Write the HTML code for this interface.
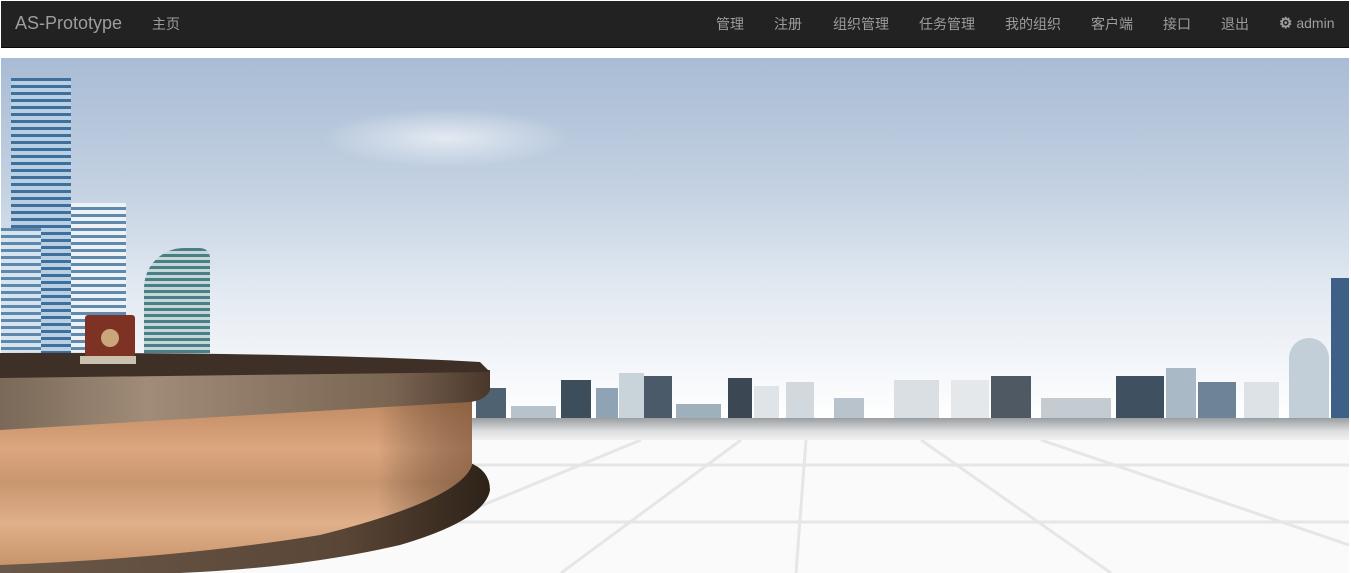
<!DOCTYPE html>
<html><head><meta charset="utf-8"><style>
body{margin:0;width:1351px;height:573px;background:#fff;overflow:hidden;font-family:"Liberation Sans","Noto Sans CJK SC",sans-serif;position:relative}
.nav{position:absolute;left:1px;top:1px;width:1348px;height:46px;background:#222;border-bottom:1px solid #080808}
.nav span{position:absolute;top:13px;font-size:14px;color:#9d9d9d;white-space:nowrap}
.brand{font-size:18px!important;top:12px!important}
.ban{position:absolute;left:1px;top:58px;width:1348px;height:515px;overflow:hidden;background:linear-gradient(#a9bcd5 0%,#c3d1e2 25%,#e2e9f1 45%,#f6f8fb 62%,#fff 70%)}
.b{position:absolute;bottom:155px}
.s{position:absolute;bottom:155px}
</style></head><body>
<div class="nav">
<span class="brand" style="left:14px">AS-Prototype</span>
<span style="left:151px">主页</span>
<span style="left:715px">管理</span>
<span style="left:773px">注册</span>
<span style="left:832px">组织管理</span>
<span style="left:918px">任务管理</span>
<span style="left:1004px">我的组织</span>
<span style="left:1090px">客户端</span>
<span style="left:1162px">接口</span>
<span style="left:1220px">退出</span>
<span style="left:1278px"><b style="font-size:15px">⚙</b> admin</span>
</div>
<div class="ban">
<div style="position:absolute;left:320px;top:50px;width:250px;height:60px;background:radial-gradient(ellipse,rgba(255,255,255,.6),rgba(255,255,255,0) 70%)"></div>
<div class="b" style="left:10px;width:60px;height:340px;background:repeating-linear-gradient(#3f6f9c 0 3px,#b9d0e2 3px 7px)"></div>
<div class="b" style="left:0;width:40px;height:190px;background:repeating-linear-gradient(#5d87ad 0 3px,#d6e4ee 3px 7px)"></div>
<div class="b" style="left:70px;width:55px;height:215px;background:repeating-linear-gradient(#eef2f5 0 4px,#5f8ab0 4px 7px)"></div>
<div class="b" style="left:143px;width:66px;height:170px;border-radius:40px 10px 0 0;background:repeating-linear-gradient(#4a7f8a 0 3px,#c6d8d6 3px 6px)"></div>
<div class="b" style="left:305px;width:42px;height:35px;border-radius:20px 20px 0 0;background:#6f8ca3"></div>
<div class="s" style="left:475px;width:30px;height:30px;background:#4f6272"></div>
<div class="s" style="left:510px;width:45px;height:12px;background:#b7c2cb"></div>
<div class="s" style="left:560px;width:30px;height:38px;background:#3e4d5a"></div>
<div class="s" style="left:595px;width:22px;height:30px;background:#8ea3b4"></div>
<div class="s" style="left:618px;width:25px;height:45px;background:#c9d3da"></div>
<div class="s" style="left:643px;width:28px;height:42px;background:#4a5a68"></div>
<div class="s" style="left:675px;width:45px;height:14px;background:#9fb0bd"></div>
<div class="s" style="left:727px;width:24px;height:40px;background:#3b4854"></div>
<div class="s" style="left:753px;width:25px;height:32px;background:#dfe4e8"></div>
<div class="s" style="left:785px;width:28px;height:36px;background:#d2d9de"></div>
<div class="s" style="left:833px;width:30px;height:20px;background:#b8c3cb"></div>
<div class="s" style="left:893px;width:45px;height:38px;background:#d9dfe3"></div>
<div class="s" style="left:950px;width:38px;height:38px;background:#e4e8eb"></div>
<div class="s" style="left:990px;width:40px;height:42px;background:#4e5963"></div>
<div class="s" style="left:1040px;width:70px;height:20px;background:#c4ccd2"></div>
<div class="s" style="left:1115px;width:48px;height:42px;background:#3f5161"></div>
<div class="s" style="left:1165px;width:30px;height:50px;background:#aab9c6"></div>
<div class="s" style="left:1197px;width:38px;height:36px;background:#6f8396"></div>
<div class="s" style="left:1243px;width:35px;height:36px;background:#dce2e6"></div>
<div class="s" style="left:1288px;width:40px;height:80px;border-radius:20px 20px 0 0;background:#c2cfd8"></div>
<div class="s" style="left:1330px;width:18px;height:140px;background:#3e5f86"></div>
<div style="position:absolute;left:0;top:360px;width:1348px;height:22px;background:linear-gradient(#9a9ea1,#dcdedf 60%,#f1f1f1)"></div>
<div style="position:absolute;left:0;top:382px;width:1348px;height:133px;background:#fafafa">
<svg width="1348" height="133" style="position:absolute;left:0;top:0"><g stroke="#e6e6e6" stroke-width="3" fill="none">
<line x1="0" y1="25" x2="1348" y2="25"/><line x1="0" y1="82" x2="1348" y2="82"/>
<line x1="805" y1="0" x2="795" y2="133"/><line x1="740" y1="0" x2="560" y2="133"/><line x1="920" y1="0" x2="1110" y2="133"/><line x1="1040" y1="0" x2="1348" y2="105"/><line x1="640" y1="0" x2="470" y2="70"/></g></svg></div>
</div>
<svg width="1351" height="573" style="position:absolute;left:0;top:0">
<defs>
<linearGradient id="w" x1="0" y1="0" x2="0" y2="1"><stop offset="0" stop-color="#c08a63"/><stop offset=".3" stop-color="#dca67f"/><stop offset=".5" stop-color="#c99670"/><stop offset=".75" stop-color="#e0b08a"/><stop offset="1" stop-color="#c8946b"/></linearGradient>
<linearGradient id="wr" x1="0" y1="0" x2="1" y2="0"><stop offset=".8" stop-color="#000" stop-opacity="0"/><stop offset="1" stop-color="#5a3a20" stop-opacity=".5"/></linearGradient>
<linearGradient id="r" x1="0" y1="0" x2="1" y2="0"><stop offset="0" stop-color="#7a6858"/><stop offset=".3" stop-color="#a08c78"/><stop offset=".8" stop-color="#7a6452"/><stop offset="1" stop-color="#4a372a"/></linearGradient>
<linearGradient id="bs" x1="0" y1="0" x2="1" y2="0"><stop offset="0" stop-color="#6a5848"/><stop offset=".7" stop-color="#5a4636"/><stop offset="1" stop-color="#2e2218"/></linearGradient>
</defs>
<path d="M0 555 Q300 530 468 462 Q490 470 490 490 Q485 520 400 545 Q300 568 180 573 L0 573 Z" fill="url(#bs)"/>
<path d="M0 428 L472 400 L472 465 Q460 500 320 535 Q180 558 0 565 Z" fill="url(#w)"/>
<path d="M0 428 L472 400 L472 465 Q460 500 320 535 Q180 558 0 565 Z" fill="url(#wr)"/>
<path d="M0 378 L490 370 L490 390 Q486 400 470 402 L0 430 Z" fill="url(#r)"/>
<path d="M0 353 Q300 352 480 362 L490 372 L0 378 Z" fill="#3e3026"/>
<rect x="85" y="315" width="50" height="42" rx="3" fill="#7d3224"/>
<circle cx="110" cy="338" r="9" fill="#c9a77a"/>
<rect x="80" y="356" width="56" height="8" fill="#c9c0ae"/>
</svg>
</body></html>
